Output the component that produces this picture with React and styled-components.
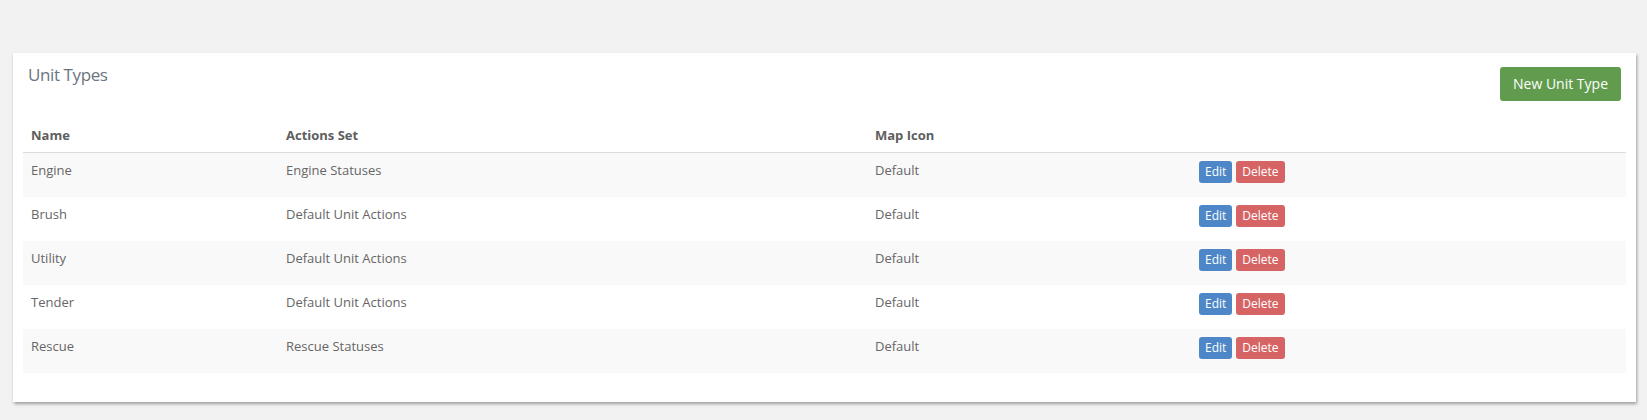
import React from "react";
import styled, { createGlobalStyle } from "styled-components";

const Global = createGlobalStyle`
  html, body { margin: 0; padding: 0; background: #f2f2f2; }
  body { font-family: "Open Sans", "Liberation Sans", sans-serif; color: #666; }
`;

const Page = styled.div`
  padding: 53px 11px 18px 13px;
`;

const Panel = styled.section`
  background: #fff;
  padding: 10px 10px 29px;
  box-shadow: 1px 2px 3px rgba(0, 0, 0, 0.35);
`;

const TitleBar = styled.div`
  display: flex;
  justify-content: space-between;
  align-items: flex-start;
  height: 54px;
`;

const Title = styled.h2`
  margin: -1px 0 0 5px;
  font-size: 17px;
  letter-spacing: -0.4px;
  line-height: 25px;
  font-weight: 400;
  color: #6b7580;
`;

const Button = styled.button`
  font-family: "Open Sans", "Liberation Sans", sans-serif;
  border: none;
  border-radius: 3px;
  color: #fff;
  cursor: pointer;
  background: ${(p) => p.$bg};
  font-size: ${(p) => (p.$small ? "12px" : "14px")};
  height: ${(p) => (p.$small ? "22px" : "34px")};
  padding: ${(p) => (p.$small ? "0 6px" : "0 13px")};
  line-height: 1;
`;

const NewButton = styled(Button)`
  margin: 4px 5px 0 0;
`;

const Table = styled.table`
  width: 100%;
  border-collapse: collapse;
  font-size: 13px;
  line-height: 18.5px;
`;

const Th = styled.th`
  text-align: left;
  font-weight: 700;
  color: #5e5e5e;
  padding: 9px 8px 7px;
  border-bottom: 1px solid #dcdcdc;
  width: ${(p) => p.$w};
`;

const Tr = styled.tr`
  background: ${(p) => (p.$striped ? "#f9f9f9" : "#fff")};
  & + & td { border-top: 1px solid #e6e6e6; }
`;

const Td = styled.td`
  vertical-align: top;
  padding: 8px;
  height: 28px;
`;

const Actions = styled.div`
  display: flex;
  gap: 4px;
`;

const rows = [
  ["Engine", "Engine Statuses", "Default"],
  ["Brush", "Default Unit Actions", "Default"],
  ["Utility", "Default Unit Actions", "Default"],
  ["Tender", "Default Unit Actions", "Default"],
  ["Rescue", "Rescue Statuses", "Default"],
];

export default function App() {
  return (
    <>
      <Global />
      <Page>
        <Panel>
          <TitleBar>
            <Title>Unit Types</Title>
            <NewButton $bg="#619c4e">New Unit Type</NewButton>
          </TitleBar>
          <Table>
            <thead>
              <tr>
                <Th $w="239px">Name</Th>
                <Th $w="573px">Actions Set</Th>
                <Th $w="308px">Map Icon</Th>
                <Th $w="419px"></Th>
              </tr>
            </thead>
            <tbody>
              {rows.map((r, i) => (
                <Tr key={r[0]} $striped={i % 2 === 0}>
                  <Td>{r[0]}</Td>
                  <Td>{r[1]}</Td>
                  <Td>{r[2]}</Td>
                  <Td>
                    <Actions>
                      <Button $small $bg="#4d87c7">Edit</Button>
                      <Button $small $bg="#d66464">Delete</Button>
                    </Actions>
                  </Td>
                </Tr>
              ))}
            </tbody>
          </Table>
        </Panel>
      </Page>
    </>
  );
}
